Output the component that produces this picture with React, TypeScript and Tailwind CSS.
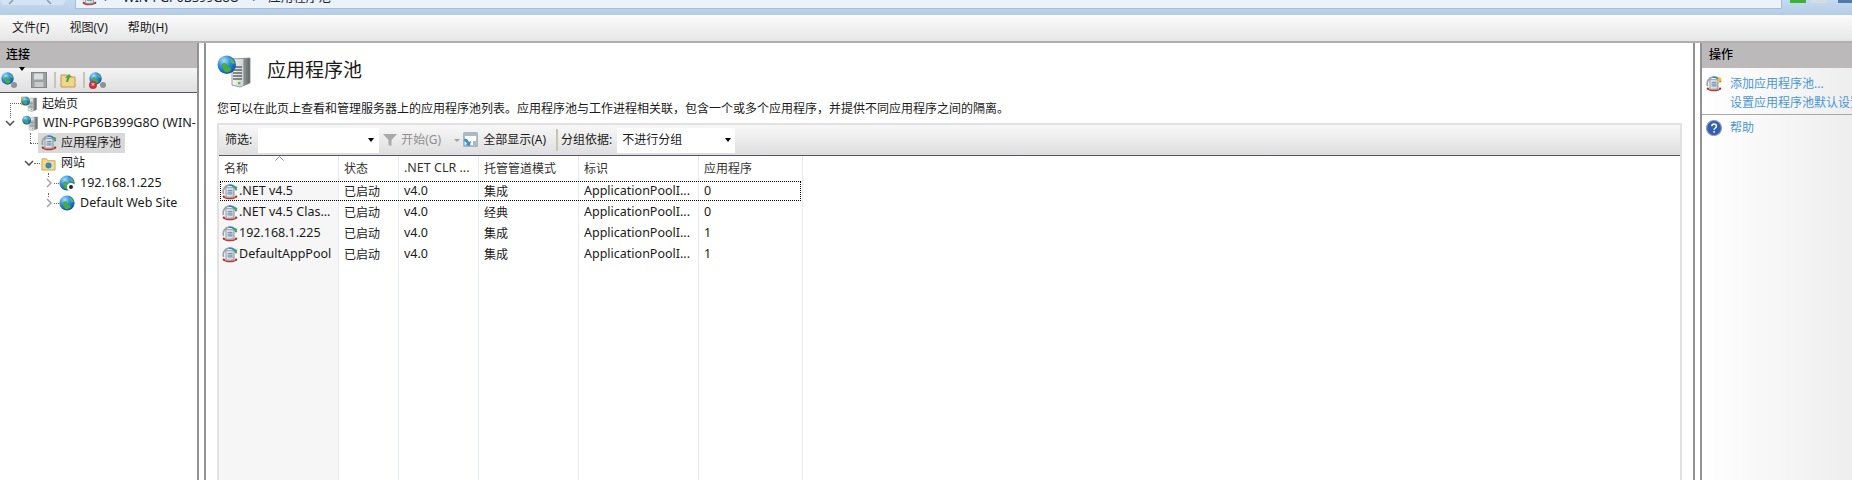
import type { ReactNode } from 'react';

const font = { fontFamily: '"Noto Sans", "Noto Sans CJK SC", sans-serif' };

function GlobeArt({ id }: { id: string }) {
  return (
    <>
      <defs>
        <radialGradient id={id} cx="35%" cy="28%" r="80%">
          <stop offset="0" stopColor="#a8dcfa" />
          <stop offset="0.45" stopColor="#2f8fdc" />
          <stop offset="1" stopColor="#0d4a9c" />
        </radialGradient>
      </defs>
      <circle cx="8" cy="8" r="7.6" fill={`url(#${id})`} />
      <path d="M4 7.500c1-1 2.500-1.200 3.500-.5s.5 1.800 1.500 2.500 3 .8 2.500 2.500-3 2.800-4.800 2c-1.500-.8-1.500-2.500-2-3.500s-1.500-2-.7-3z" fill="#46ad3f" />
      <path d="M11 2.500c1.800 1 3.300 2.700 3.800 4.500l-2 .2c-1.200-.8-2.300-2.700-1.800-4.700z" fill="#5dbb4d" />
    </>
  );
}

function Globe({ className, id }: { className?: string; id: string }) {
  return (
    <svg viewBox="0 0 16 16" className={className}>
      <GlobeArt id={id} />
    </svg>
  );
}

function GlobeServer({ className, id, folder }: { className?: string; id: string; folder?: boolean }) {
  return (
    <svg viewBox="0 0 34 34" className={className}>
      <defs>
        <linearGradient id={`${id}-s`} x1="0" x2="1" y1="0" y2="0">
          <stop offset="0" stopColor="#f6f7f7" />
          <stop offset="0.62" stopColor="#cfd3d3" />
          <stop offset="0.65" stopColor="#8d9393" />
          <stop offset="1" stopColor="#5f6565" />
        </linearGradient>
      </defs>
      {folder && <path d="M0 2h14l3 3h-4v14H0z" fill="#f2c53d" stroke="#b98a1e" strokeWidth="0.8" />}
      <path d="M15 5l18-1v25l-10 4-8-2z" fill={`url(#${id}-s)`} stroke="#7c8282" strokeWidth="0.8" />
      <path d="M16 13h9M16 16h9M16 19h9M16 22h9M16 25h9" stroke="#5f6666" strokeWidth="1.3" />
      <rect x="21" y="28" width="2.400" height="2.400" fill="#57c14a" />
      <g transform="translate(0 1) scale(1.220)">
        <GlobeArt id={`${id}-g`} />
      </g>
    </svg>
  );
}

function AppPool({ className, id, star }: { className?: string; id: string; star?: boolean }) {
  return (
    <svg viewBox="0 0 16 16" className={className}>
      <defs>
        <linearGradient id={id} x1="0" x2="1" y1="0" y2="1">
          <stop offset="0" stopColor="#ffffff" />
          <stop offset="1" stopColor="#c9ced2" />
        </linearGradient>
      </defs>
      <path d="M1.600 10a6.600 6.600 0 0 1 5.400-8.800" fill="none" stroke="#9aa3a9" strokeWidth="1.700" />
      <path d="M6.800 1.200a6.800 6.800 0 0 1 7.600 5" fill="none" stroke="#2b84d2" strokeWidth="1.800" />
      <rect x="4" y="3.800" width="8" height="9.400" fill={`url(#${id})`} stroke="#6f7a82" strokeWidth="0.800" />
      <path d="M5.500 6.300h5M5.500 8.100h5M5.500 9.900h5" stroke="#47789f" strokeWidth="0.900" />
      <path d="M1.500 12.600c2.400 2.800 10.400 2.800 13 0" fill="none" stroke="#c8342b" strokeWidth="1.200" />
      <circle cx="1.800" cy="12.600" r="1.100" fill="#a92a22" />
      <circle cx="14.200" cy="12.600" r="1.100" fill="#a92a22" />
      {star ? (
        <path d="M13 0l.9 2.200 2.100-.6-1 2 1 1.800-2.100-.3-1 1.900-.6-2.200-2.200-.6 1.800-1.200z" fill="#f4bf24" />
      ) : (
        <path d="M11.500 1.500l4 1.400-2 3.200z" fill="#45ab3c" />
      )}
    </svg>
  );
}

function ComboArrow() {
  return <span className="h-0 w-0 border-x-[3.5px] border-t-[4px] border-x-transparent border-t-black" />;
}

function Chevron({ open }: { open?: boolean }) {
  return (
    <svg viewBox="0 0 10 10" className="h-[10px] w-[10px] shrink-0">
      <path
        d={open ? 'M1 3l4 4 4-4' : 'M3 1l4 4-4 4'}
        fill="none"
        stroke={open ? '#555' : '#a8a8a8'}
        strokeWidth="1.600"
      />
    </svg>
  );
}

function TreeRow({ pad, children }: { pad: string; children: ReactNode }) {
  return <div className={`relative flex h-[20px] items-center ${pad}`}>{children}</div>;
}

const columns = [
  { label: '名称', w: 'w-[120px]', bg: 'bg-[#f6f6f6]' },
  { label: '状态', w: 'w-[60px]', bg: '' },
  { label: '.NET CLR ...', w: 'w-[80px]', bg: '' },
  { label: '托管管道模式', w: 'w-[100px]', bg: '' },
  { label: '标识', w: 'w-[120px]', bg: '' },
  { label: '应用程序', w: 'w-[104px]', bg: '' },
];

const rows = [
  ['.NET v4.5', '已启动', 'v4.0', '集成', 'ApplicationPoolI...', '0'],
  ['.NET v4.5 Clas...', '已启动', 'v4.0', '经典', 'ApplicationPoolI...', '0'],
  ['192.168.1.225', '已启动', 'v4.0', '集成', 'ApplicationPoolI...', '1'],
  ['DefaultAppPool', '已启动', 'v4.0', '集成', 'ApplicationPoolI...', '1'],
];

const isCjk = (text: string) => /[\u4e00-\u9fff]/.test(text);

export default function App() {
  return (
    <div style={font} className="flex h-[480px] w-[1852px] flex-col overflow-hidden bg-white text-[12px] leading-none text-[#1a1a1a]">
      {/* Window chrome, cut off by the top of the picture */}
      <div className="flex h-[15px] shrink-0 items-start bg-gradient-to-b from-[#c5daf0] to-[#b4cce6]">
        <svg viewBox="0 0 75 8" className="h-[8px] w-[75px] shrink-0">
          <path d="M0 0h66l-3 5H3z" fill="#d4e3f3" />
          <path d="M13 0l-4 4M47 0l4 4" fill="none" stroke="#8f9aa8" strokeWidth="1.500" />
        </svg>
        <div className="flex h-[9px] w-[1707px] shrink-0 items-end overflow-hidden border-x border-b border-[#a7bdd8] bg-[#ebf2f9] pl-[6px]">
          <AppPool className="mb-[2px] h-[15px] w-[15px] shrink-0" id="crumb-pool" />
          <div className="mb-[3px] ml-[7px] flex items-center text-[12.500px] leading-[14px] text-[#222]">
            <span className="text-[7px]">▶</span>
            <span className="ml-[12px]">WIN-PGP6B399G8O</span>
            <span className="ml-[13px] text-[7px]">▶</span>
            <span className="ml-[9px]">应用程序池</span>
          </div>
        </div>
        <div className="ml-[8px] flex items-start gap-[5px]">
          <div className="h-[3px] w-[16px] bg-[#3bb33b]" />
          <div className="h-[3px] w-[16px] bg-[#d5dbe2]" />
          <div className="ml-[6px] h-[3px] w-[16px] bg-[#5279a8]" />
        </div>
      </div>

      {/* Menu bar */}
      <div className="flex h-[26px] shrink-0 items-center gap-[20px] bg-gradient-to-b from-[#fbfbfb] to-[#e6e6e6] pl-[12px]">
        <span>文件(F)</span>
        <span>视图(V)</span>
        <span>帮助(H)</span>
      </div>

      <div className="flex min-h-0 flex-1 border-t-2 border-[#b0b0b0] bg-white">
        {/* Connections */}
        <aside className="flex w-[199px] shrink-0 flex-col border-r-2 border-[#929292]">
          <div className="flex h-[25px] shrink-0 items-center bg-[#bbb9ba] pb-[1px] pl-[6px] font-medium text-black">连接</div>
          <div className="flex h-[25px] shrink-0 items-center border-b border-[#55536f] bg-gradient-to-b from-[#f4f4f4] to-[#dfdfdf] pl-[1px]">
            <span className="relative block h-[17px] w-[17px]">
              <Globe className="h-[13px] w-[13px]" id="tb-globe" />
              <span className="absolute bottom-[1px] right-[1px] h-[6px] w-[6px] rounded-full bg-[#8c9298]" />
            </span>
            <span className="ml-[1px] mr-[6px]"><ComboArrow /></span>
            <svg viewBox="0 0 16 16" className="h-[16px] w-[16px]">
              <rect x="0.500" y="0.500" width="15" height="15" fill="#9ca0a3" stroke="#83878a" />
              <rect x="3" y="1.500" width="9" height="6" fill="#dcdedf" />
              <rect x="3.500" y="10" width="9" height="5" fill="#c7c9ca" />
            </svg>
            <span className="ml-[7px] h-[16px] w-[2px] bg-[#c9c5b4]" />
            <svg viewBox="0 0 16 16" className="ml-[4px] h-[16px] w-[16px]">
              <path d="M1 3h6l1 2h7v10H1z" fill="#f2d58a" stroke="#c09a4a" />
              <path d="M6 10l1-4-2 0 4-4 3 3-2 0-2 5z" fill="#4aa83e" />
            </svg>
            <span className="ml-[7px] h-[16px] w-[2px] bg-[#c9c5b4]" />
            <span className="relative ml-[4px] block h-[17px] w-[17px]">
              <Globe className="h-[13px] w-[13px]" id="tb-globe2" />
              <span className="absolute bottom-[1px] right-0 h-[6px] w-[6px] rounded-full bg-[#8c9298]" />
              <span className="absolute bottom-0 left-0 flex h-[8px] w-[8px] items-center justify-center rounded-full bg-[#c8303a] text-[7px] text-white">×</span>
            </span>
          </div>
          <div className="flex flex-col">
            <TreeRow pad="pl-[21px] pt-[1px]">
              <span className="absolute left-[10px] top-[10px] h-[15px] border-l border-dotted border-[#666]" />
              <span className="absolute left-[10px] top-[10px] w-[11px] border-t border-dotted border-[#666]" />
              <GlobeServer className="h-[16px] w-[16px] shrink-0" id="t-start" folder />
              <span className="ml-[5px]">起始页</span>
            </TreeRow>
            <TreeRow pad="pl-[5px]">
              <Chevron open />
              <GlobeServer className="ml-[7px] h-[16px] w-[16px] shrink-0" id="t-srv" />
              <span className="ml-[5px] whitespace-nowrap text-[12.500px]">WIN-PGP6B399G8O (WIN-</span>
            </TreeRow>
            <TreeRow pad="pl-[38px]">
              <span className="absolute left-[30px] top-0 h-[10px] border-l border-dotted border-[#666]" />
              <span className="absolute left-[30px] top-[10px] w-[8px] border-t border-dotted border-[#666]" />
              <span className="flex h-[20px] w-[87px] items-center bg-[#d9d9d9] pl-[3px]">
                <AppPool className="h-[16px] w-[16px] shrink-0" id="t-pool" />
                <span className="ml-[4px]">应用程序池</span>
              </span>
            </TreeRow>
            <TreeRow pad="pl-[24px]">
              <Chevron open />
              <span className="w-[6px] border-t border-dotted border-[#666]" />
              <svg viewBox="0 0 16 16" className="ml-[1px] h-[15px] w-[15px] shrink-0">
                <path d="M1 3h5l1 2h8v10H1z" fill="#f3d98f" stroke="#c8a558" />
                <circle cx="8" cy="10" r="3.200" fill="#2f86c8" />
                <path d="M6 9c1-1 2-1 2 0s1 2-1 3z" fill="#4aa83e" />
              </svg>
              <span className="ml-[5px]">网站</span>
            </TreeRow>
            <TreeRow pad="pl-[44px]">
              <span className="absolute left-[48px] top-0 h-[4px] border-l border-dotted border-[#666]" />
              <Chevron />
              <span className="w-[5px] border-t border-dotted border-[#666]" />
              <span className="relative block h-[16px] w-[16px] shrink-0">
                <Globe className="h-[16px] w-[16px]" id="t-g1" />
                <span className="absolute bottom-0 right-0 h-[8px] w-[8px] rounded-full border-2 border-white bg-[#222]" />
              </span>
              <span className="ml-[5px] text-[12.500px]">192.168.1.225</span>
            </TreeRow>
            <TreeRow pad="pl-[44px]">
              <span className="absolute left-[48px] top-0 h-[4px] border-l border-dotted border-[#666]" />
              <Chevron />
              <span className="w-[5px] border-t border-dotted border-[#666]" />
              <Globe className="h-[16px] w-[16px] shrink-0" id="t-g2" />
              <span className="ml-[5px] text-[12.500px]">Default Web Site</span>
            </TreeRow>
          </div>
        </aside>

        {/* Application pools */}
        <main className="ml-[5px] flex w-[1491px] shrink-0 flex-col border-x-2 border-[#929292] px-[11px]">
          <div className="flex h-[55px] shrink-0 items-center">
            <GlobeServer className="h-[34px] w-[34px] shrink-0" id="h-srv" />
            <h1 className="ml-[16px] text-[19px] font-normal">应用程序池</h1>
          </div>
          <p className="h-[25px] shrink-0 pt-[2px] leading-[18px]">
            您可以在此页上查看和管理服务器上的应用程序池列表。应用程序池与工作进程相关联，包含一个或多个应用程序，并提供不同应用程序之间的隔离。
          </p>
          <div className="flex min-h-0 flex-1 flex-col border-x-2 border-t-2 border-[#e2e2e2]">
            <div className="flex h-[31px] shrink-0 items-center border-b border-[#55536f] bg-gradient-to-b from-[#f8f8f8] to-[#dedede] pl-[6px]">
              <span>筛选:</span>
              <div className="ml-[6px] flex h-[25px] w-[121px] items-center justify-end bg-white pr-[5px]">
                <ComboArrow />
              </div>
              <svg viewBox="0 0 14 14" className="ml-[4px] h-[14px] w-[14px]">
                <path d="M0 1h14L8.500 7v6l-3-1V7z" fill="#a9a9a9" />
              </svg>
              <span className="ml-[4px] text-[#8f8f8f]">开始(G)</span>
              <span className="ml-[13px] h-0 w-0 border-x-[3px] border-t-[3px] border-x-transparent border-t-[#a0a0a0]" />
              <svg viewBox="0 0 16 16" className="ml-[3px] h-[16px] w-[16px]">
                <rect x="1" y="1" width="13" height="13" fill="#fff" stroke="#6f7f8f" />
                <rect x="1" y="1" width="13" height="3" fill="#a9bacb" />
                <path d="M1 7c3-1 4 1 5 3l2-1-1 5-5-1 2-1c-1-2-2-3-3-3z" fill="#3a8fd8" />
                <path d="M10 10h3M10 12h3" stroke="#55708c" />
              </svg>
              <span className="ml-[4px]">全部显示(A)</span>
              <span className="ml-[10px] h-[22px] w-[2px] bg-[#c9c5b4]" />
              <span className="ml-[3px]">分组依据:</span>
              <div className="ml-[5px] flex h-[25px] w-[118px] items-center justify-between bg-white pl-[5px] pr-[4px]">
                <span>不进行分组</span>
                <ComboArrow />
              </div>
            </div>
            {/* List view */}
            <div className="relative flex min-h-0 flex-1">
              <div className="absolute left-[1px] top-[25px] h-[20px] w-[581px] border border-dotted border-black" />
              {columns.map((col, i) => (
                <div key={col.label} className={`flex ${col.w} shrink-0 flex-col border-r border-[#e6ebf3] ${col.bg}`}>
                  <div className="relative flex h-[25px] shrink-0 items-center bg-white pl-[5px] text-[#333]">
                    {i === 0 && (
                      <svg viewBox="0 0 9 5" className="absolute left-[56px] top-0 h-[5px] w-[9px]">
                        <path d="M0.500 4.500l4-4 4 4" fill="none" stroke="#888" />
                      </svg>
                    )}
                    <span className={isCjk(col.label) ? '' : 'text-[12.500px]'}>{col.label}</span>
                  </div>
                  {rows.map((row) => (
                    <div key={row[0]} className="flex h-[21px] shrink-0 items-center whitespace-nowrap pl-[5px]">
                      {i === 0 && <AppPool className="-ml-[2px] mr-[1px] h-[16px] w-[16px] shrink-0" id={`p-${row[0].replace(/\W/g, '')}`} />}
                      <span className={isCjk(row[i]) ? '' : 'text-[12.500px]'}>{row[i]}</span>
                    </div>
                  ))}
                </div>
              ))}
            </div>
          </div>
        </main>

        {/* Actions */}
        <aside className="ml-[5px] flex min-w-0 flex-1 flex-col border-l-2 border-[#929292] bg-gradient-to-r from-white to-[#eeeeee]">
          <div className="flex h-[25px] shrink-0 items-center bg-[#bbb9ba] pb-[1px] pl-[7px] font-medium text-black">操作</div>
          <div className="flex flex-col border-b border-[#a8a8a8] pb-[2px] pt-[6px] text-[#4a96d6]">
            <div className="flex h-[19px] items-center whitespace-nowrap pl-[4px]">
              <AppPool className="h-[16px] w-[16px] shrink-0" id="a-pool" star />
              <span className="ml-[8px]">添加应用程序池...</span>
            </div>
            <div className="h-[19px] whitespace-nowrap pl-[28px] leading-[19px]">设置应用程序池默认设置...</div>
          </div>
          <div className="flex h-[25px] items-center pl-[4px] text-[#4a96d6]">
            <svg viewBox="0 0 16 16" className="h-[16px] w-[16px] shrink-0">
              <circle cx="8" cy="8" r="7.500" fill="#2f5fb8" stroke="#9aa0a8" strokeWidth="1.200" />
              <path d="M5.800 6.200c0-3 4.600-3 4.600 0 0 1.800-2.300 1.800-2.300 3.600" fill="none" stroke="#fff" strokeWidth="1.500" />
              <rect x="7.300" y="11" width="1.600" height="1.600" fill="#fff" />
            </svg>
            <span className="ml-[8px]">帮助</span>
          </div>
        </aside>
      </div>
    </div>
  );
}
